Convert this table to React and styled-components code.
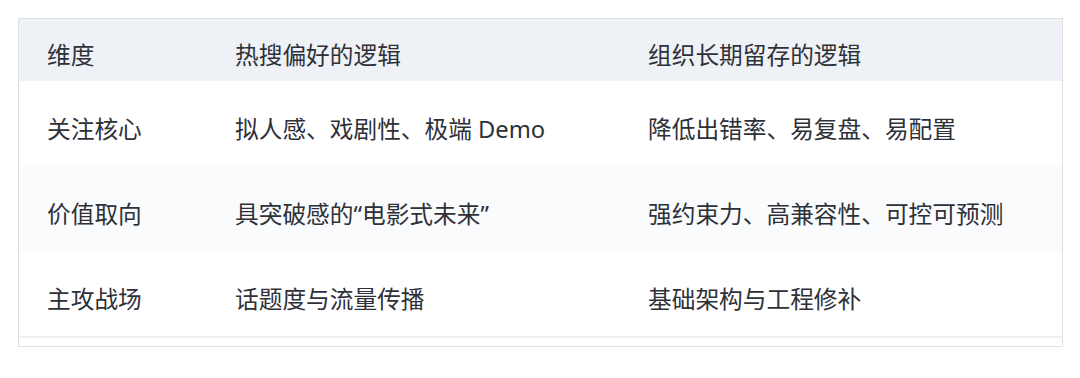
import React from "react";
import styled, { createGlobalStyle } from "styled-components";

const Global = createGlobalStyle`
  html, body { margin: 0; padding: 0; background: #ffffff; }
  body { font-family: "Noto Sans", "Noto Sans CJK SC", sans-serif; }
`;

const Wrap = styled.div`
  padding: 18px 18px 0 18px;
`;

const TableBox = styled.div`
  width: 1045px;
  box-sizing: border-box;
  border: 1px solid #dedfe1;
  background: #ffffff;
`;

const Row = styled.div`
  display: grid;
  grid-template-columns: 188px 413px 1fr;
  height: ${(p) => (p.$head ? 62 : 85)}px;
  background: ${(p) => (p.$head ? "#eef1f6" : p.$alt ? "#f9fbfd" : "#ffffff")};
`;

const Cell = styled.div`
  display: flex;
  align-items: center;
  box-sizing: border-box;
  padding: ${(p) => (p.$head ? "12px 28px 0" : "13px 28px 0")};
  font-family: "Noto Sans", "Noto Sans CJK SC", sans-serif;
  font-size: 23.7px;
  line-height: 1.5;
  color: #2e3138;
  white-space: nowrap;
`;

const ScrollTrack = styled.div`
  height: 8px;
  border-top: 2px solid #eeeff1;
`;

const header = ["维度", "热搜偏好的逻辑", "组织长期留存的逻辑"];
const rows = [
  ["关注核心", "拟人感、戏剧性、极端 Demo", "降低出错率、易复盘、易配置"],
  ["价值取向", "具突破感的“电影式未来”", "强约束力、高兼容性、可控可预测"],
  ["主攻战场", "话题度与流量传播", "基础架构与工程修补"],
];

export default function App() {
  return (
    <>
      <Global />
      <Wrap>
        <TableBox>
          <Row $head>
            {header.map((h) => (
              <Cell $head key={h}>{h}</Cell>
            ))}
          </Row>
          {rows.map((r, i) => (
            <Row key={i} $alt={i === 1}>
              {r.map((c) => (
                <Cell key={c}>{c}</Cell>
              ))}
            </Row>
          ))}
          <ScrollTrack />
        </TableBox>
      </Wrap>
    </>
  );
}
